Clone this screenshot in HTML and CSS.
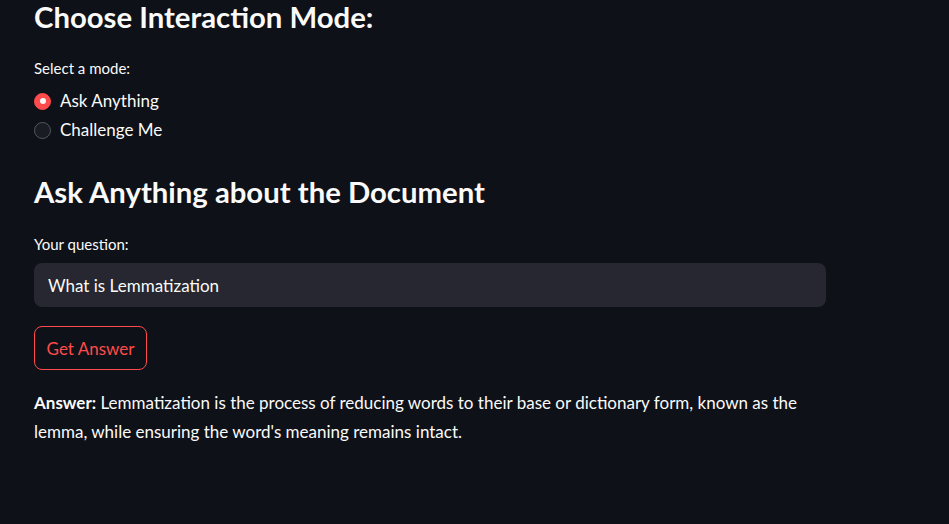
FILE: index.html
```html
<!DOCTYPE html>
<html lang="en">
<head>
<meta charset="utf-8">
<title>Interaction Mode</title>
<link rel="stylesheet" href="styles.css">
</head>
<body>
<main class="main">
  <h3 class="heading heading-first">Choose Interaction Mode:</h3>
  <div class="widget">
    <div class="label">Select a mode:</div>
    <div class="radio-group">
      <label class="radio"><span class="dot dot-on"></span><span class="radio-text">Ask Anything</span></label>
      <label class="radio"><span class="dot"></span><span class="radio-text">Challenge Me</span></label>
    </div>
  </div>
  <h3 class="heading heading-second">Ask Anything about the Document</h3>
  <div class="widget">
    <div class="label label-q">Your question:</div>
    <div class="input">What is Lemmatization</div>
  </div>
  <button class="btn">Get Answer</button>
  <p class="answer"><strong>Answer:</strong> Lemmatization is the process of reducing words to their base or dictionary form, known as the lemma, while ensuring the word's meaning remains intact.</p>
</main>
</body>
</html>
```

FILE: styles.css
```css
* { box-sizing: border-box; }
html, body {
  margin: 0;
  padding: 0;
  background: #0e1117;
  color: #fafafa;
  font-family: "Lato", "Noto Sans", sans-serif;
}
.main {
  width: 792px;
  margin-left: 34px;
  display: flex;
  flex-direction: column;
  align-items: flex-start;
}
.heading {
  margin: 0;
  font-size: 29.3px;
  font-weight: 700;
  line-height: 36px;
  letter-spacing: 0;
}
.heading-first { margin-top: -1px; }
.heading-second { margin-top: 32px; }
.widget { display: flex; flex-direction: column; width: 100%; }
.label {
  font-size: 15px;
  line-height: 20px;
  margin-top: 23px;
  margin-bottom: 11px;
}
.label-q { margin-top: 24px; margin-bottom: 9px; }
.radio-group { display: flex; flex-direction: column; gap: 5px; }
.radio {
  display: flex;
  align-items: center;
  gap: 9px;
  font-size: 17px;
  line-height: 24px;
}
.dot {
  width: 17px;
  height: 17px;
  border-radius: 50%;
  border: 1.5px solid #55575e;
  background: #1a1c24;
  display: flex;
  align-items: center;
  justify-content: center;
}
.dot-on {
  background: #ff4b4b;
  border-color: #ff4b4b;
}
.dot-on::after {
  content: "";
  width: 6px;
  height: 6px;
  border-radius: 50%;
  background: #fafafa;
}
.input {
  width: 100%;
  height: 44px;
  background: #262730;
  border-radius: 8px;
  padding: 0 14px;
  display: flex;
  align-items: center;
  font-size: 17px;
}
.btn {
  margin-top: 19px;
  height: 44px;
  width: 113px;
  background: transparent;
  border: 1px solid #ff4b4b;
  border-radius: 8px;
  color: #ff4b4b;
  font-family: inherit;
  font-size: 17px;
  padding: 0;
}
.answer {
  margin: 18px 0 0;
  font-size: 17px;
  line-height: 29px;
}
.answer strong { font-weight: 700; }
```
